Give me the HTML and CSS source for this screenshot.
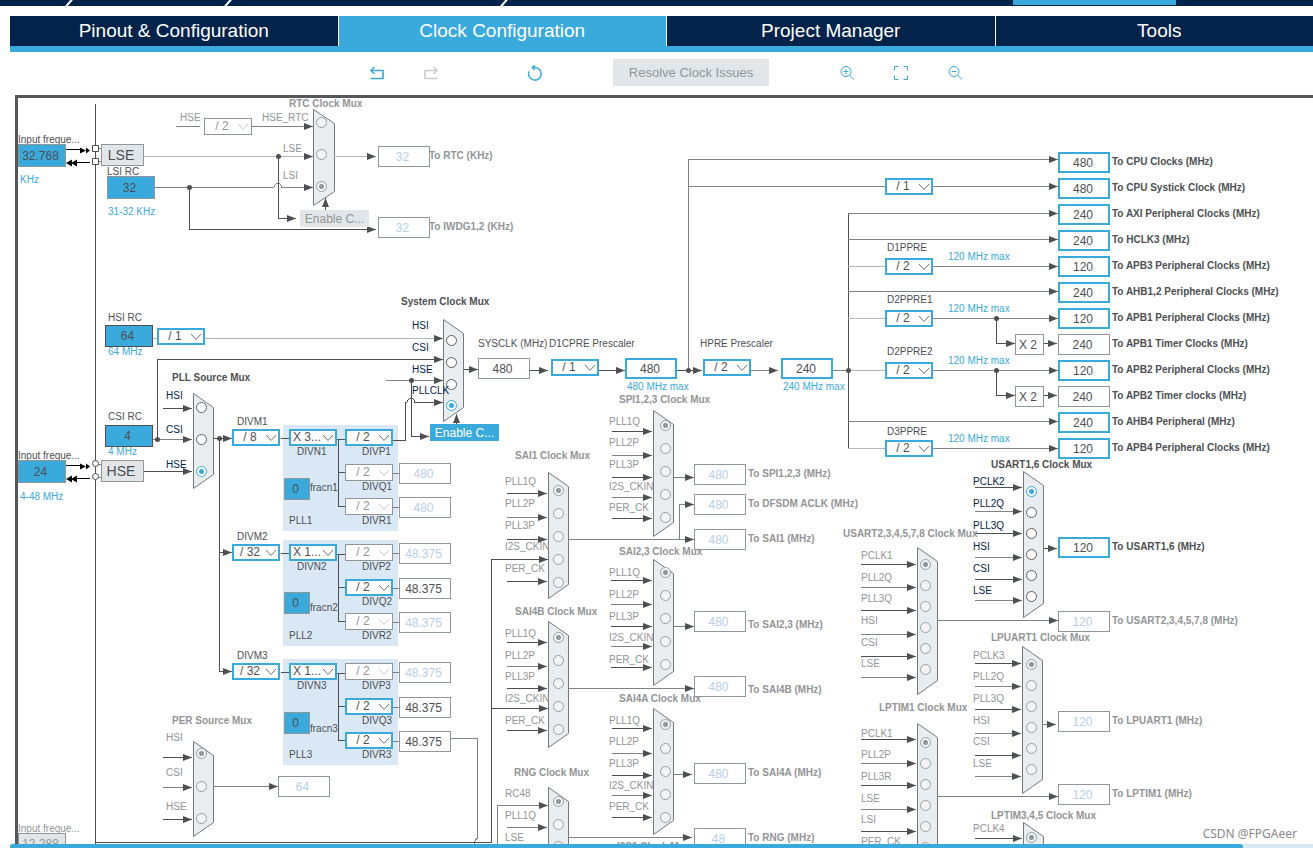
FILE: index.html
```html
<!DOCTYPE html>
<html lang="en">
<head>
<meta charset="utf-8">
<title>Clock Configuration</title>
<link rel="stylesheet" href="styles.css">
</head>
<body>
<header class="crumbs">
  <svg class="slash slash-a" width="10" height="6" viewBox="0 0 10 6"><path d="M2 6.500L8-.5"/></svg>
  <svg class="slash slash-b" width="10" height="6" viewBox="0 0 10 6"><path d="M2 6.500L8-.5"/></svg>
  <svg class="slash slash-c" width="10" height="6" viewBox="0 0 10 6"><path d="M2 6.500L8-.5"/></svg>
  <span class="crumb-action"></span>
</header>
<nav class="tabs">
  <button class="tab">Pinout &amp; Configuration</button>
  <button class="tab active">Clock Configuration</button>
  <button class="tab">Project Manager</button>
  <button class="tab">Tools</button>
</nav>
<div class="toolbar">
  <div class="tools">
    <button class="icon" aria-label="Undo"><svg width="16" height="16" viewBox="0 0 16 16"><path d="M1.500 13.500H14V5.500H3" stroke-width="1.600"/><path d="M5.500 2L2 5.500L5.500 9" stroke-width="1.600"/></svg></button>
    <button class="icon muted" aria-label="Redo"><svg width="16" height="16" viewBox="0 0 16 16"><path d="M14.500 13.500H2V5.500H13" stroke-width="1.600"/><path d="M10.500 2L14 5.500L10.500 9" stroke-width="1.600"/></svg></button>
  </div>
  <button class="icon" aria-label="Reset clocks"><svg width="16" height="16" viewBox="0 0 16 16"><path d="M6 2.500H8A6.300 6.300 0 1 1 2 6.500" stroke-width="1.500"/><path d="M8 .3L5.200 2.600L8 5" stroke-width="1.400"/></svg></button>
  <button class="resolve" disabled>Resolve Clock Issues</button>
  <div class="tools">
    <button class="icon" aria-label="Zoom in"><svg width="16" height="16" viewBox="0 0 16 16"><circle cx="7" cy="6.500" r="5"/><path d="M10.600 10.200L15 14.500M4.500 6.500H9.500M7 4V9"/></svg></button>
    <button class="icon" aria-label="Fit"><svg width="16" height="16" viewBox="0 0 16 16"><path d="M1.500 5.500V1.500H5.500M10.500 1.500H14.500V5.500M14.500 10.500V14.500H10.500M5.500 14.500H1.500V10.500"/></svg></button>
    <button class="icon" aria-label="Zoom out"><svg width="16" height="16" viewBox="0 0 16 16"><circle cx="7" cy="6.500" r="5"/><path d="M10.600 10.200L15 14.500M4.500 6.500H9.500"/></svg></button>
  </div>
</div>
<main class="canvas" id="canvas"></main>
<footer class="scroll"><span class="thumb"></span></footer>
<div class="watermark">CSDN @FPGAeer</div>
<script src="app.js"></script>
</body>
</html>
```
FILE: styles.css
```css
* { box-sizing: border-box; }
body {
  margin: 0;
  height: 100vh;
  display: flex;
  flex-direction: column;
  overflow: hidden;
  background: #fff;
  color: #4d4f53;
  font-family: "Liberation Sans", Arial, sans-serif;
}
button, input, select { font: inherit; color: inherit; margin: 0; padding: 0; border: 0; border-radius: 0; background: none; }

.crumbs { position: relative; flex: none; height: 6px; background: #03234b; }
.slash { position: absolute; top: 0; }
.slash path { stroke: #fff; stroke-width: 2; fill: none; }
.slash-a { left: 64px; }
.slash-b { left: 223px; }
.slash-c { left: 499px; }
.crumb-action { position: absolute; left: 1013px; top: 0; width: 163px; height: 5px; background: #3aa9dc; }

.tabs {
  flex: none;
  display: flex;
  gap: 1px;
  margin: 10px -10px 0 10px;
  height: 36px;
  border-bottom: 6px solid #3aa9dc;
}
.tab { flex: 1; background: #03234b; color: #fff; font-size: 19px; line-height: 30px; }
.tab.active { background: #3aa9dc; }

.toolbar { flex: none; display: flex; align-items: center; height: 43px; padding: 0 0 2px 369px; }
.tools { display: flex; gap: 38px; }
.tools + .icon { margin-left: 88px; }
.icon { display: block; width: 16px; height: 16px; color: #3aa9dc; }
.icon.muted { color: #c9cbcc; }
.icon svg { display: block; fill: none; stroke: currentColor; stroke-width: 1; }
.resolve { width: 156px; height: 27px; margin: 0 70px; background: #e2e6e9; color: #8f979b; font-size: 13px; }

.canvas {
  position: relative;
  flex: 1;
  margin-left: 15px;
  border: solid #54585b;
  border-width: 3px 0 0 3px;
  overflow: hidden;
}
.wires { position: absolute; left: 0; top: 0; width: 100%; height: 100%; overflow: hidden; }
.wire { fill: none; stroke: #808385; stroke-width: 1; shape-rendering: crispEdges; }
.wire.dark { stroke: #4d4f53; }
.wire.light { stroke: #b4b6b8; }
.wire.black { stroke: #000; }
.solid { fill: #4d4f53; }
.solid.black { fill: #000; }
.pin { fill: #fff; stroke: #4d4f53; }
.block { fill: #dae8f5; }
.mux { fill: #e9edf0; stroke: #73797d; }

.label, .box, .pick, .radio, .enable { position: absolute; }
.label { font-size: 10px; line-height: 12px; white-space: nowrap; }
.label.bold { font-weight: bold; }
.label.off { color: #929496; }
.label.navy { color: #03234b; }
.label.blue { color: #3aa9dc; }

.box { font-size: 12px; text-align: center; background: #fff; border: 1px solid #8f979b; padding-right: 3px; }
.box.on { border: 2px solid #3aa9dc; padding-right: 2px; }
.box.off { color: #b7cfe8; }
.box.grayed { color: #929496; }
.box.src { background: #3aa9dc; }
.box.src.firm { border-color: #4d4f53; }
.box.dim { background: #e2e6e9; color: #929496; }
.box.tag { display: flex; align-items: center; justify-content: center; }
.box.osc { display: flex; align-items: center; justify-content: center; font-size: 14px; background: #e2e6e9; }

.pick { width: 48px; height: 17px; border: 2px solid #3aa9dc; background: #fff; }
.pick.off { border: 1px solid #8f979b; color: #929496; }
.pick select { appearance: none; display: block; width: 100%; height: 100%; padding-right: 12px; font-size: 12px; line-height: 13px; text-align: center; text-align-last: center; opacity: 1; }
.pick svg { position: absolute; right: 1px; bottom: 2px; pointer-events: none; fill: none; stroke: #6d7174; }
.pick.off svg { stroke: #c4c6c8; right: 2px; bottom: 3px; }

.radio { appearance: none; width: 11px; height: 11px; border: 1px solid #5c6063; border-radius: 50%; background: #fff; }
.radio.off { border-color: #9a9fa3; background: #f1f3f5; }
.radio:checked { border-color: #3aa9dc; background: radial-gradient(circle, #3aa9dc 0 2px, #fff 3px); }
.radio.off:checked { border-color: #9a9fa3; background: radial-gradient(circle, #8f979b 0 2px, #f1f3f5 3px); }

.enable { width: 69px; height: 17px; font-size: 12px; line-height: 16px; background: #3aa9dc; color: #fff; }
.enable.off { background: #e2e6e9; color: #8f979b; }

.scroll { flex: none; height: 4px; margin-left: 10px; background: #dae8f5; }
.thumb { display: block; height: 4px; margin-right: 70px; border-radius: 3px 3px 0 0; background: #3aa9dc; }
.watermark { position: absolute; right: 16px; bottom: 6px; font: 12px/16px "Noto Sans", sans-serif; color: #87898b; }
```
FILE: app.js
```js
// Top-left corner of the drawing area, in diagram coordinates.
const ORIGIN = { x: 18, y: 98 };
const canvas = document.getElementById('canvas');
const shapes = [];

function place(tag, cls, x, y, w, h) {
  const el = document.createElement(tag);
  el.className = cls;
  el.style.left = (x - ORIGIN.x) + 'px';
  el.style.top = (y - ORIGIN.y) + 'px';
  if (w) el.style.width = w + 'px';
  if (h) el.style.height = h + 'px';
  canvas.appendChild(el);
  return el;
}
// A label is placed by its left edge and its vertical middle.
function label(text, x, yc, cls = '') {
  place('span', 'label ' + cls, x, yc - 6).textContent = text;
}
function box(text, x, y, cls = '', w = 52, h = 21, name = 'Frequency') {
  const el = place('input', 'box ' + cls, x, y, w, h);
  el.value = text;
  el.setAttribute('aria-label', name);
}
function tag(text, x, y, w, h, cls) {
  place('div', 'box ' + cls, x, y, w, h).textContent = text;
}
function pick(text, x, y, on = true, name = 'Divider') {
  const el = place('div', 'pick' + (on ? '' : ' off'), x, y);
  el.innerHTML = `<select aria-label="${name}"><option>${text}</option></select>` +
    '<svg width="12" height="8" viewBox="0 0 12 8"><path d="M1 1L6 6.500L11 1"/></svg>';
}
function wire(d, cls = '', arrow = true) {
  shapes.push(`<path class="wire ${cls}" d="${d}"${arrow ? ' marker-end="url(#tip)"' : ''}/>`);
}
function dot(x, y) { shapes.push(`<circle class="solid" cx="${x}.5" cy="${y}.5" r="2.500"/>`); }

// One multiplexer: body, its inputs (label, label y, wire y, radio y) and its selection.
function mux(m) {
  const { x, y, h, w = 20 } = m;
  shapes.push(`<path class="mux" d="M${x}.5 ${y}.5L${x + w}.5 ${y + 14}.5V${y + h - 14}.5L${x}.5 ${y + h}.5Z"/>`);
  label(m.title, m.tx, m.ty, 'bold' + (m.on ? '' : ' off'));
  m.inputs.forEach(([text, ly, wy, ry, from], i) => {
    if (wy) wire(`M${from || m.wx} ${wy}.5H${x - 1}`, i % 2 ? '' : 'dark');
    const r = place('input', 'radio' + (m.on ? '' : ' off'), m.rx - 5, ry - 5);
    r.type = 'radio';
    r.name = m.title;
    r.checked = i === m.sel;
    r.setAttribute('aria-label', m.title + ' ' + text);
    if (text) label(text, m.lx, ly, m.on ? 'navy' : 'off');
  });
}

// Chip boundary
wire('M95.500 104V844', 'dark', false);

// Low-speed sources and RTC
function crystal(y) {
  wire(`M66 ${y}.5H80`, 'black', false);
  wire(`M90 ${y + 13}.5H76`, 'black', false);
  shapes.push(`<path class="solid black" d="M80 ${y - 2}.5l6 3l-6 3zM86 ${y - 2}.5l4 3l-4 3zM77 ${y + 10}.5v7l-6-3.500zM72 ${y + 10}.5v7l-6-3.500z"/>`);
  wire(`M98 ${y - 1}.5H101M98 ${y + 12}.5H101`, '', false);
}
crystal(149);
shapes.push('<path class="pin" d="M92.500 145.500h6v6h-6zM92.500 158.500h6v6h-6z"/>');
label('Input freque...', 18, 140);
box('32.768', 18, 144, 'src', 48, 23, 'LSE input frequency');
label('KHz', 20, 180, 'blue');
tag('LSE', 101, 144, 43, 22, 'osc');
label('LSI RC', 107, 172);
box('32', 107, 176, 'src', 48, 23, 'LSI RC');
label('31-32 KHz', 108, 212, 'blue');
label('HSE', 180, 118, 'off');
wire('M176 126.500H200', '', false);
pick('/ 2', 204, 118, false, 'HSE RTC divider');
wire('M144 156.500H313', 'light');
wire('M155 187.500H274A4 4 0 0 1 282 187.500H313');
wire('M278.500 156V218.500H296', 'dark');
wire('M189.500 187V229.500H376', 'dark');
dot(278, 156); dot(189, 187);
mux({ title: 'RTC Clock Mux', tx: 289, ty: 104, x: 313, y: 109, h: 96, w: 21, lx: 283, rx: 321, sel: 2, inputs: [
  ['', 0, 0, 122], ['LSE', 149, 0, 154], ['LSI', 176, 0, 186]] });
label('HSE_RTC', 262, 118, 'off');
wire('M252 126.500H313');
wire('M334 156.500H376', 'light');
wire('M325.500 210V198', 'dark');
box('32', 378, 146, 'off'); label('To RTC (KHz)', 429, 156, 'bold off');
box('32', 378, 217, 'off'); label('To IWDG1,2 (KHz)', 429, 227, 'bold off');
place('button', 'enable off', 300, 210).textContent = 'Enable C...';

// HSI, CSI, HSE
label('HSI RC', 108, 318);
box('64', 105, 325, 'src firm', 48, 22, 'HSI RC');
label('64 MHz', 108, 352, 'blue');
wire('M153 338.500H157', 'light', false);
wire('M205 338.500H443', 'light');
pick('/ 1', 157, 328, true, 'HSI divider');
label('CSI RC', 108, 417);
box('4', 105, 425, 'src firm', 48, 22, 'CSI RC');
label('4 MHz', 108, 452, 'blue');
wire('M157.500 439V359.500H443', 'dark');
wire('M153 439.500H157', '', false);
crystal(465);
shapes.push('<circle class="pin" cx="95.500" cy="463.500" r="3"/><circle class="pin" cx="95.500" cy="476.500" r="3"/>');
label('Input freque...', 18, 456);
box('24', 18, 460, 'src', 48, 23, 'HSE input frequency');
label('4-48 MHz', 20, 497, 'blue');
tag('HSE', 101, 460, 43, 22, 'osc');
mux({ title: 'PLL Source Mux', on: true, tx: 172, ty: 378, x: 193, y: 393, h: 95, lx: 166, wx: 163, rx: 201, sel: 2, inputs: [
  ['HSI', 396, 408, 407], ['CSI', 430, 439, 439, 157], ['HSE', 465, 471, 471, 144]] });
dot(157, 439);
wire('M213 438.500H232', 'dark');
wire('M219.500 438V552.500H232', 'dark');
wire('M219.500 552V671.500H232', 'dark');
dot(219, 438);

// PLLs
function pll(n, top, m, mult, outs, frac, fracLabel) {
  shapes.push(`<rect class="block" x="283" y="${top - 4}" width="115" height="106"/>`);
  label('DIVM' + n, 237, top - 7);
  pick(m, 232, top, true, 'DIVM' + n);
  wire(`M281 ${top + 9}.5H289M337 ${top + 10}.5H345`, 'dark', false);
  wire(`M338.500 ${top + 10}V${top + 77}.5H345M338.500 ${top + 43}.5H345`, 'dark', false);
  pick(mult, 289, top, true, 'DIVN' + n);
  label('DIVN' + n, 297, top + 23);
  box('0', 284, frac, 'src', 26, 22, 'fracn' + n);
  label('fracn' + n, 310, fracLabel);
  label('PLL' + n, 289, top + 92);
  ['P', 'Q', 'R'].forEach((k, i) => {
    const y = top + [0, 35, 69][i];
    const [on, value] = outs[i];
    pick('/ 2', 345, y, on, 'DIV' + k + n);
    label('DIV' + k + n, 362, top + [23, 58, 92][i]);
    if (value) {
      wire(`M393 ${y + 9}.5H399`, '', false);
      box(value, 399, y - 1, on ? '' : 'off');
    }
  });
}
pll(1, 429, '/ 8', 'X 3...', [[true, ''], [false, '480'], [false, '480']], 478, 488);
pll(2, 544, '/ 32', 'X 1...', [[false, '48.375'], [true, '48.375'], [false, '48.375']], 592, 608);
pll(3, 663, '/ 32', 'X 1...', [[false, '48.375'], [true, '48.375'], [true, '48.375']], 712, 729);
wire('M393 440.500H405.500V402.500H407A4 4 0 0 1 415 402.500H443', 'dark');
wire('M451 738.500H477.500V838L474 842V844', '', false);
wire('M95 842.500H491.500V559.500H548', 'dark');

// System clock
wire('M386 380.500H443');
wire('M411.500 380V436.500H429', 'dark');
dot(411, 380);
mux({ title: 'System Clock Mux', on: true, tx: 401, ty: 302, x: 443, y: 319, h: 102, lx: 412, rx: 451, sel: 3, inputs: [
  ['HSI', 326, 0, 340], ['CSI', 348, 0, 362], ['HSE', 370, 0, 384], ['PLLCLK', 391, 0, 405]] });
wire('M456.500 424V414', 'dark');
place('button', 'enable', 430, 424).textContent = 'Enable C...';
wire('M464 369.500H478', 'dark');
box('480', 478, 358, '', 52, 21, 'SYSCLK');
label('SYSCLK (MHz)', 478, 344); label('D1CPRE Prescaler', 549, 344);
wire('M530 370.500H548', 'dark');
pick('/ 1', 551, 359, true, 'D1CPRE Prescaler');
wire('M599 370.500H625', 'dark');
box('480', 625, 358, 'on');
label('480 MHz max', 627, 387, 'blue');
wire('M677 370.500H702', 'dark');
label('HPRE Prescaler', 700, 344);
pick('/ 2', 703, 359, true, 'HPRE Prescaler');
wire('M751 370.500H778');
box('240', 781, 358, 'on');
label('240 MHz max', 783, 387, 'blue');
wire('M688.500 370V159.500H1058');
wire('M688 186.500H885', '', false);
dot(688, 370);

// Bus prescalers and outputs
wire('M848.500 213V448', 'dark', false);
wire('M833 370.500H885', '', false);
pick('/ 1', 885, 178, true, 'Systick divider');
wire('M933 186.500H1058');
[['D1PPRE', 248, 258, 257], ['D2PPRE1', 300, 310, 309], ['D2PPRE2', 352, 362, 361], ['D3PPRE', 432, 440, 439]].forEach(([name, ly, y, my]) => {
  label(name, 887, ly);
  wire(`M848 ${y + 8}.5H885`, 'light', false);
  wire(`M933 ${y + 8}.5H1058`);
  pick('/ 2', 885, y, true, name);
  label('120 MHz max', 948, my, 'blue');
});
[214, 240, 292, 422].forEach(y => wire(`M848 ${y - 1}.5H1058`));
dot(848, 370);
[318, 370].forEach(y => {
  wire(`M996.500 ${y}V${y + 25}.5H1015`, 'dark');
  dot(996, y);
  tag('X 2', 1015, y + 16, 29, 21, 'tag');
  wire(`M1044 ${y + 25}.5H1057`, 'dark');
});
[['480', 'To CPU Clocks (MHz)'], ['480', 'To CPU Systick Clock (MHz)'], ['240', 'To AXI Peripheral Clocks (MHz)'],
 ['240', 'To HCLK3 (MHz)'], ['120', 'To APB3 Peripheral Clocks (MHz)'], ['240', 'To AHB1,2 Peripheral Clocks (MHz)'],
 ['120', 'To APB1 Peripheral Clocks (MHz)'], ['240', 'To APB1 Timer Clocks (MHz)'], ['120', 'To APB2 Peripheral Clocks (MHz)'],
 ['240', 'To APB2 Timer clocks (MHz)'], ['240', 'To AHB4 Peripheral (MHz)'], ['120', 'To APB4 Peripheral Clocks (MHz)']
].forEach(([value, name], i) => {
  box(value, 1058, 152 + 26 * i, name.includes('Timer') ? '' : 'on', 52, 21, name);
  label(name, 1112, 162 + 26 * i, 'bold');
});

// Kernel clock muxes
const AUDIO = ['PLL1Q', 'PLL2P', 'PLL3P', 'I2S_CKIN', 'PER_CK'];
const UART = ['PLL2Q', 'PLL3Q', 'HSI', 'CSI', 'LSE'];
const rows = (names, ly, wy, ry) => names.map((n, i) => [n, ly[i], wy[i], ry[i]]);

mux({ title: 'SPI1,2,3 Clock Mux', tx: 619, ty: 400, x: 653, y: 410, h: 126, lx: 609, wx: 612, rx: 665, sel: 0,
  inputs: rows(AUDIO, [422, 443, 465, 487, 508], [431, 455, 477, 497, 518], [425, 448, 471, 494, 517]) });
mux({ title: 'SAI1 Clock Mux', tx: 515, ty: 456, x: 548, y: 472, h: 126, lx: 505, wx: 507, rx: 558, sel: 0,
  inputs: rows(AUDIO, [482, 504, 526, 547, 569], [493, 517, 539, 0, 581], [490, 513, 536, 559, 582]) });
mux({ title: 'SAI4B Clock Mux', tx: 515, ty: 612, x: 548, y: 621, h: 126, lx: 505, wx: 507, rx: 558, sel: 0,
  inputs: rows(AUDIO, [634, 656, 677, 699, 721], [642, 666, 688, 0, 730], [637, 660, 683, 706, 729]) });
wire('M491 708.500H548', 'dark');
mux({ title: 'SAI2,3 Clock Mux', tx: 619, ty: 552, x: 653, y: 559, h: 126, lx: 609, wx: 611, rx: 665, sel: 0,
  inputs: rows(AUDIO, [573, 595, 617, 638, 660], [580, 604, 626, 646, 667], [572, 595, 618, 641, 664]) });
mux({ title: 'SAI4A Clock Mux', tx: 619, ty: 699, x: 653, y: 708, h: 126, lx: 609, wx: 612, rx: 665, sel: 0,
  inputs: rows(AUDIO, [721, 742, 764, 786, 807], [728, 753, 775, 795, 817], [724, 748, 771, 794, 817]) });
mux({ title: 'RNG Clock Mux', tx: 514, ty: 773, x: 548, y: 787, h: 110, lx: 505, wx: 507, rx: 558, sel: 0,
  inputs: rows(['RC48', 'PLL1Q', 'LSE'], [794, 816, 838], [0, 827, 0], [801, 824, 846]) });
wire('M497.500 844V805.500H548');
label('I2S1 Clock Mux', 617, 847, 'bold off');
mux({ title: 'PER Source Mux', tx: 172, ty: 721, x: 193, y: 741, h: 95, lx: 166, wx: 163, rx: 201, sel: 0,
  inputs: rows(['HSI', 'CSI', 'HSE'], [738, 773, 807], [757, 787, 819], [753, 786, 818]) });
mux({ title: 'USART1,6 Clock Mux', on: true, tx: 991, ty: 465, x: 1023, y: 471, h: 146, lx: 973, wx: 975, rx: 1031, sel: 0,
  inputs: rows(['PCLK2', ...UART], [482, 504, 526, 547, 569, 591], [487, 511, 533, 557, 579, 600], [491, 512, 533, 554, 575, 596]) });
mux({ title: 'USART2,3,4,5,7,8 Clock Mux', tx: 843, ty: 534, x: 917, y: 547, h: 147, lx: 861, wx: 861, rx: 925, sel: 0,
  inputs: rows(['PCLK1', ...UART], [556, 578, 599, 621, 643, 664], [564, 587, 610, 634, 656, 677], [564, 585, 606, 627, 648, 669]) });
mux({ title: 'LPUART1 Clock Mux', tx: 991, ty: 638, x: 1022, y: 646, h: 147, lx: 973, wx: 975, rx: 1031, sel: 0,
  inputs: rows(['PCLK3', ...UART], [656, 677, 699, 721, 742, 764], [663, 686, 709, 733, 755, 776], [664, 685, 706, 727, 748, 769]) });
mux({ title: 'LPTIM1 Clock Mux', tx: 879, ty: 708, x: 917, y: 723, h: 147, lx: 861, wx: 861, rx: 925, sel: 0,
  inputs: rows(['PCLK1', 'PLL2P', 'PLL3R', 'LSE', 'LSI', 'PER_CK'], [734, 755, 777, 799, 820, 842], [739, 763, 785, 809, 831, 0], [742, 763, 784, 805, 826, 847]) });
mux({ title: 'LPTIM3,4,5 Clock Mux', tx: 991, ty: 816, x: 1023, y: 822, h: 147, lx: 973, wx: 975, rx: 1031, sel: 0,
  inputs: [['PCLK4', 829, 838, 837]] });

// Kernel clock outputs: wire start, wire end, wire y, box x, box y, value, label, label y
[[674, 694, 477, 694, 464, '480', 'To SPI1,2,3 (MHz)', 474],
 [679, 694, 504, 694, 494, '480', 'To DFSDM ACLK (MHz)', 504],
 [569, 694, 539, 694, 529, '480', 'To SAI1 (MHz)', 539],
 [674, 694, 626, 694, 611, '480', 'To SAI2,3 (MHz)', 625],
 [569, 694, 688, 694, 676, '480', 'To SAI4B (MHz)', 690],
 [674, 692, 774, 694, 763, '480', 'To SAI4A (MHz)', 773],
 [569, 692, 837, 694, 828, '48', 'To RNG (MHz)', 838],
 [213, 278, 786, 278, 776, '64', '', 0],
 [937, 1058, 620, 1058, 611, '120', 'To USART2,3,4,5,7,8 (MHz)', 621],
 [1043, 1056, 724, 1058, 711, '120', 'To LPUART1 (MHz)', 721],
 [937, 1058, 796, 1058, 784, '120', 'To LPTIM1 (MHz)', 794]
].forEach(([x1, x2, wy, bx, by, value, name, ly]) => {
  wire(`M${x1} ${wy}.5H${x2}`);
  box(value, bx, by, 'off', 52, 21, name || 'PER clock');
  if (name) label(name, bx + 54, ly, 'bold off');
});
wire('M679.500 539V504', '', false);
wire('M1044 548.500H1057', 'dark');
box('120', 1058, 537, 'on'); label('To USART1,6 (MHz)', 1112, 547, 'bold');

// External clock input
label('Input freque...', 18, 829, 'off');
box('12.288', 18, 833, 'dim', 48, 22, 'External clock input');

canvas.insertAdjacentHTML('afterbegin',
  `<svg class="wires"><defs><marker id="tip" markerUnits="userSpaceOnUse" markerWidth="9" markerHeight="8" refX="9" refY="3.500" orient="auto"><path class="solid" d="M0 0L9 3.500L0 7Z"/></marker></defs>` +
  `<g transform="translate(${-ORIGIN.x} ${-ORIGIN.y})">${shapes.join('')}</g></svg>`);
```
